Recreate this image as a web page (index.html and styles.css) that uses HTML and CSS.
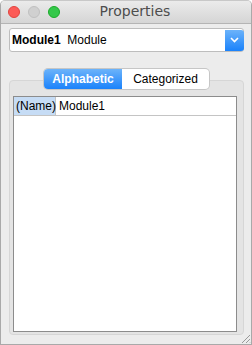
FILE: index.html
```html
<!DOCTYPE html>
<html lang="en">
<head>
<meta charset="UTF-8">
<title>Properties</title>
<link rel="stylesheet" href="styles.css">
</head>
<body>
<div class="window">
  <div class="titlebar">
    <div class="lights">
      <span class="light close"></span>
      <span class="light min"></span>
      <span class="light zoom"></span>
    </div>
    <div class="title">Properties</div>
  </div>

  <div class="content">
    <div class="combo">
      <div class="combo-text"><b>Module1</b>&nbsp; Module</div>
      <div class="combo-btn">
        <svg width="9" height="6" viewBox="0 0 9 6"><path d="M1 1 L4.5 4.5 L8 1" fill="none" stroke="#fff" stroke-width="1.6"/></svg>
      </div>
    </div>

    <div class="group">
      <div class="seg">
        <span class="seg-item on">Alphabetic</span>
        <span class="seg-item">Categorized</span>
      </div>
      <div class="grid">
        <div class="row">
          <div class="cell name">(Name)</div>
          <div class="cell val">Module1</div>
        </div>
      </div>
    </div>
  </div>
  <div class="grip">
    <svg width="11" height="11" viewBox="0 0 11 11"><path d="M10 2 L2 10 M10 6 L6 10 M10 9.5 L9.5 10" stroke="#999" stroke-width="1"/></svg>
  </div>
</div>
</body>
</html>
```

FILE: styles.css
```css
html, body
{
margin: 0;
padding: 0;
background: #fff;
}

body
{
font-family: "Liberation Sans", Arial, sans-serif;
font-size: 12px;
color: #000;
}

.window
{
position: relative;
width: 250px;
height: 343px;
border: 1px solid #a9a9a9;
border-top-color: #c8c8c8;
border-radius: 5px 5px 0 0;
background: #ececec;
overflow: hidden;
display: flex;
flex-direction: column;
}

.titlebar
{
height: 22px;
flex: none;
background: linear-gradient(#ebebeb, #d5d5d5);
border-bottom: 1px solid #b4b4b4;
display: flex;
align-items: center;
position: relative;
}

.lights
{
display: flex;
gap: 8px;
padding-left: 7px;
}

.light
{
width: 12px;
height: 12px;
border-radius: 50%;
box-sizing: border-box;
}

.close { background: #fc5b57; border: 1px solid #e0443e; }
.min { background: #d0d0d0; border: 1px solid #c0c0c0; }
.zoom { background: #34c84a; border: 1px solid #1aab29; }

.title
{
position: absolute;
left: 0;
right: 0;
top: 2px;
text-align: center;
font-family: "DejaVu Sans", sans-serif;
font-size: 14px;
color: #4d4d4d;
padding-left: 18px;
}

.content
{
flex: 1;
padding: 4px 7px 9px 8px;
display: flex;
flex-direction: column;
}

.combo
{
height: 22px;
background: #fff;
border: 1px solid #bdbdbd;
border-radius: 3px;
display: flex;
align-items: center;
}

.combo-text
{
flex: 1;
padding-left: 2px;
font-size: 12px;
}

.combo-btn
{
width: 19px;
height: 21px;
margin-right: -1px;
border-radius: 0 3px 3px 0;
background: linear-gradient(#6cb3fa, #1a82fb);
display: flex;
align-items: center;
justify-content: center;
}

.group
{
flex: 1;
margin-top: 28px;
position: relative;
background: #e4e4e4;
border: 1px solid #d6d6d6;
border-radius: 4px;
padding: 15px 6px 2px 3px;
display: flex;
flex-direction: column;
}

.seg
{
position: absolute;
top: -12px;
left: 34px;
display: flex;
height: 20px;
border-radius: 4px;
box-shadow: 0 0 0 1px #c6c6c6;
background: #fff;
overflow: hidden;
}

.seg-item
{
display: flex;
align-items: center;
justify-content: center;
font-size: 12px;
}

.seg-item:first-child { width: 78px; }
.seg-item:last-child { width: 87px; }

.seg-item.on
{
background: linear-gradient(#6cb3fa, #1a82fb);
color: #fff;
font-weight: bold;
}

.grid
{
flex: 1;
background: #fff;
border: 1px solid #8c8c8c;
}

.row
{
display: flex;
height: 18px;
border-bottom: 1px solid #c4c4c4;
}

.cell
{
display: flex;
align-items: center;
padding-left: 2px;
}

.name
{
width: 39px;
background: #c6dcf5;
border-right: 1px solid #c4c4c4;
}

.val
{
padding-left: 3px;
}

.grip
{
position: absolute;
right: 0;
bottom: 0;
line-height: 0;
}
```
